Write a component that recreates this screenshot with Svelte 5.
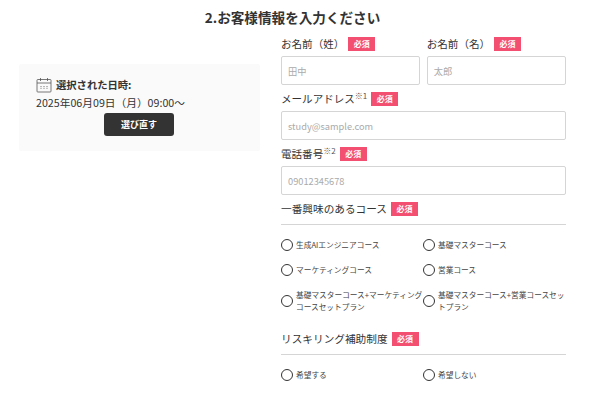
<script lang="ts">
    const courses = [
        '生成AIエンジニアコース',
        '基礎マスターコース',
        'マーケティングコース',
        '営業コース',
        '基礎マスターコース+マーケティングコースセットプラン',
        '基礎マスターコース+営業コースセットプラン'
    ];
    const subsidy = ['希望する', '希望しない'];
</script>

<main class="page">
    <h2 class="title">2.お客様情報を入力ください</h2>
    <div class="columns">
        <aside class="selected">
            <div class="selected-head">
                <svg class="cal" width="16" height="16" viewBox="0 0 16 16" fill="none" stroke="#555" stroke-width="0.8">
                    <rect x="1" y="2.5" width="14" height="12.5" rx="0.8" />
                    <path d="M1 6h14M4.5 1v3M11.5 1v3" />
                    <path d="M5 9v3.5M8 9v3.5M11 9v3.5" stroke-dasharray="1 0.8" />
                </svg>
                <strong>選択された日時:</strong>
            </div>
            <div class="selected-date">2025年06月09日（月）09:00〜</div>
            <button class="reselect">選び直す</button>
        </aside>

        <form class="form">
            <div class="name-row">
                <div class="field">
                    <div class="label">お名前（姓）<span class="req">必須</span></div>
                    <input placeholder="田中" />
                </div>
                <div class="field">
                    <div class="label">お名前（名）<span class="req">必須</span></div>
                    <input placeholder="太郎" />
                </div>
            </div>
            <div class="field">
                <div class="label">メールアドレス<sup>※1</sup><span class="req">必須</span></div>
                <input placeholder="study@sample.com" />
            </div>
            <div class="field">
                <div class="label">電話番号<sup>※2</sup><span class="req">必須</span></div>
                <input placeholder="09012345678" />
            </div>

            <div class="group-head">一番興味のあるコース<span class="req">必須</span></div>
            <div class="radios">
                {#each courses as course}
                    <label class="radio"><span class="dot"></span><span class="radio-text">{course}</span></label>
                {/each}
            </div>

            <div class="group-head second">リスキリング補助制度<span class="req">必須</span></div>
            <div class="radios">
                {#each subsidy as item}
                    <label class="radio"><span class="dot"></span><span class="radio-text">{item}</span></label>
                {/each}
            </div>
        </form>
    </div>
</main>

<style>
:global(body) {
    margin: 0;
    background: #fff;
    font-family: "Noto Sans CJK JP", "Noto Sans", sans-serif;
    color: #333;
}

.page {
    width: 609px;
    height: 409px;
    overflow: hidden;
    box-sizing: border-box;
    padding: 7px 43px 0 19px;
}

.title {
    margin: 0 0 10px;
    font-size: 13.6px;
    line-height: 20px;
    font-weight: 700;
    text-align: center;
    color: #333;
}

.columns {
    display: flex;
    gap: 21px;
    align-items: flex-start;
}

.selected {
    width: 241px;
    height: 87px;
    margin-top: 27px;
    box-sizing: border-box;
    padding: 13px 17px 0;
    background: #fafafa;
    border-radius: 2px;
    flex-shrink: 0;
}

.selected-head {
    display: flex;
    align-items: center;
    gap: 4px;
    font-size: 10.3px;
    line-height: 16px;
}

.cal {
    flex-shrink: 0;
}

.selected-date {
    font-size: 10.7px;
    line-height: 15px;
    margin-top: 2px;
    white-space: nowrap;
}

.reselect {
    display: block;
    width: 70px;
    height: 23px;
    margin: 3px 0 0 68px;
    padding: 0;
    border: none;
    border-radius: 3px;
    background: #333;
    color: #fff;
    font-family: inherit;
    font-size: 9px;
    font-weight: 700;
}

.form {
    width: 285px;
    display: flex;
    flex-direction: column;
}

.name-row {
    display: flex;
    gap: 6.5px;
}

.name-row .field {
    flex: 1;
}

.field {
    margin-bottom: 7px;
}

.label,
.group-head {
    display: flex;
    align-items: center;
    height: 14px;
    font-size: 10.56px;
    line-height: 14px;
    white-space: nowrap;
}

.label {
    margin-bottom: 5px;
}

sup {
    font-size: 8px;
    line-height: 8px;
    align-self: flex-start;
    color: #555;
}

.req {
    display: inline-block;
    width: 27px;
    height: 14px;
    margin-left: 4px;
    background: #f34f70;
    color: #fff;
    font-size: 8px;
    font-weight: 700;
    line-height: 14px;
    text-align: center;
}

input {
    display: block;
    width: 100%;
    height: 29px;
    box-sizing: border-box;
    padding: 0 6px;
    border: 1px solid #d5d5d5;
    border-radius: 2px;
    background: #fff;
    font-family: inherit;
    font-size: 9.24px;
}

input::placeholder {
    color: #aaa;
}

.group-head {
    font-size: 10.66px;
    padding-bottom: 8px;
    box-sizing: content-box;
    border-bottom: 1px solid #d5d5d5;
    margin-bottom: 14px;
}

.group-head.second {
    margin-top: 19px;
}

.radios {
    display: grid;
    grid-template-columns: 142px 143px;
    row-gap: 13px;
}

.radio {
    display: flex;
    align-items: center;
    gap: 3px;
    font-size: 7.7px;
    line-height: 12px;
    min-height: 12px;
    color: #444;
}

.dot {
    width: 12px;
    height: 12px;
    box-sizing: border-box;
    border: 1px solid #333;
    border-radius: 50%;
    flex-shrink: 0;
}

.radio-text {
    word-break: break-all;
}
</style>
